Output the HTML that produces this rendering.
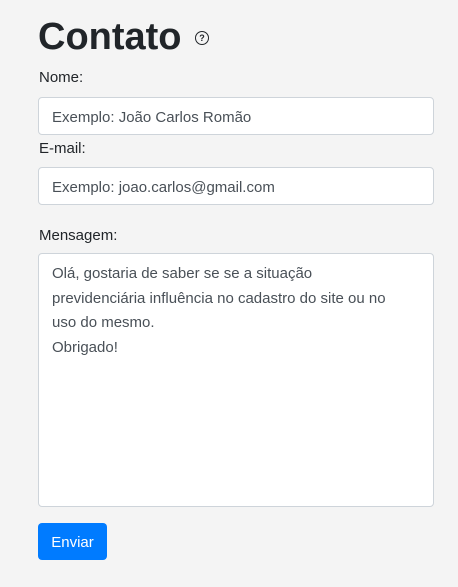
<!DOCTYPE html>
<html><head><style>
body{margin:0;background:#f4f4f4;font-family:"Liberation Sans",sans-serif;color:#212529;width:458px;height:587px;overflow:hidden;position:relative}
h1{position:absolute;left:38px;top:13px;margin:0;font-size:38px;font-weight:bold;line-height:48px;color:#212529}
.q{position:absolute;left:195px;top:31px;width:12px;height:12px;border:1.5px solid #212529;border-radius:50%;font-size:9px;line-height:12px;text-align:center;font-weight:bold}
.l{position:absolute;left:39px;font-size:15px}
.in{position:absolute;left:38px;width:396px;background:#fff;border:1px solid #ced4da;border-radius:4px;color:#495057;font-size:15px;box-sizing:border-box;padding-left:13px;white-space:nowrap}
.btn{position:absolute;left:38px;top:523px;width:69px;height:37px;background:#007bff;color:#fff;border-radius:4px;font-size:15px;line-height:39px;text-align:center}
</style></head><body>
<h1>Contato</h1><div class="q">?</div>
<div class="l" style="top:69px">Nome:</div>
<div class="in" style="top:97px;height:38px;line-height:39px">Exemplo: João Carlos Romão</div>
<div class="l" style="top:140px">E-mail:</div>
<div class="in" style="top:167px;height:38px;line-height:39px">Exemplo: joao.carlos@gmail.com</div>
<div class="l" style="top:227px">Mensagem:</div>
<div class="in" style="top:253px;height:254px;line-height:24.7px;padding-top:8px">Olá, gostaria de saber se se a situação<br>previdenciária influência no cadastro do site ou no<br>uso do mesmo.<br>Obrigado!</div>
<div class="btn">Enviar</div>
</body></html>
